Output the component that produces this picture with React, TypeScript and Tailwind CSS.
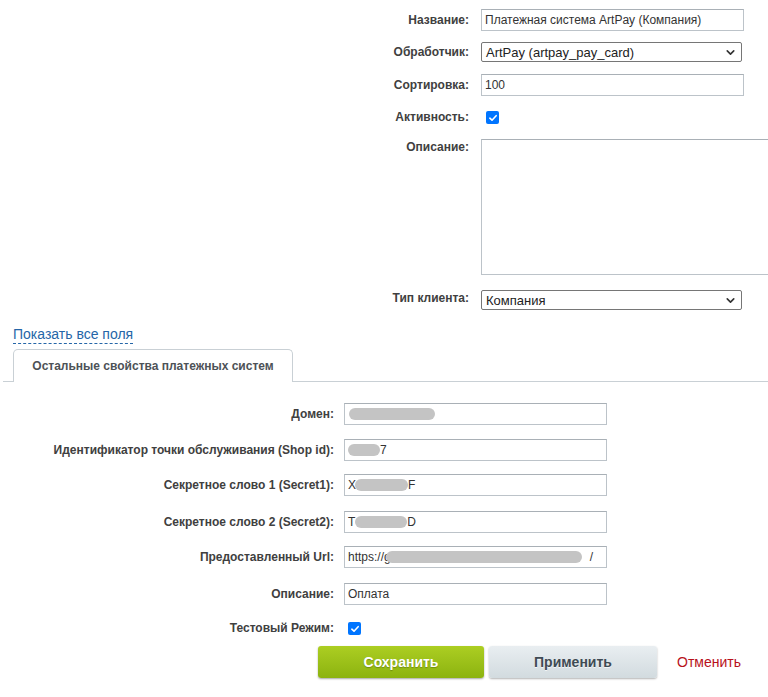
import { ChevronDown } from "lucide-react";

const font = { fontFamily: '"Liberation Sans", Arial, sans-serif' };

function Blob({ w, className = "" }: { w: number; className?: string }) {
  return <span className={`inline-block h-[12px] rounded-full bg-[#c4c4c4] ${className}`} style={{ width: w }} />;
}

function TopRow({ label, children, className = "", pt = "pt-[4px]" }: { label: string; children: React.ReactNode; className?: string; pt?: string }) {
  return (
    <div className={`flex items-start ${className}`}>
      <div className={`w-[469px] shrink-0 text-right text-[12px] leading-[14px] font-bold text-[#404040] ${pt}`}>{label}</div>
      <div className="ml-3">{children}</div>
    </div>
  );
}

function BottomRow({ label, children, className = "", pt = "pt-[4px]" }: { label: string; children: React.ReactNode; className?: string; pt?: string }) {
  return (
    <div className={`flex items-start ${className}`}>
      <div className={`w-[334px] shrink-0 text-right text-[12px] leading-[14px] font-bold text-[#404040] ${pt}`}>{label}</div>
      <div className="ml-[10px]">{children}</div>
    </div>
  );
}

function Field({ children, w = 263 }: { children: React.ReactNode; w?: number }) {
  return (
    <div
      className="h-[22px] border border-[#bcc3c9] border-t-[#a9b0b6] bg-white flex items-center px-[3px] text-[12px] leading-[14px] text-[#333] whitespace-nowrap overflow-hidden"
      style={{ width: w }}
    >
      {children}
    </div>
  );
}

function Select({ value }: { value: string }) {
  return (
    <div className="w-[261px] h-[20px] border border-[#767676] rounded-[2px] bg-white flex items-center justify-between pl-[4px] pr-[4px] text-[13px] leading-[15px] text-[#222]">
      <span>{value}</span>
      <ChevronDown className="size-[13px] text-[#333]" strokeWidth={3} />
    </div>
  );
}

function Check() {
  return (
    <div className="w-[13px] h-[13px] rounded-[2px] bg-[#0075ff] flex items-center justify-center">
      <svg viewBox="0 0 12 12" className="w-[10px] h-[10px]">
        <path d="M2.2 6.2 L4.8 8.6 L9.8 3.2" fill="none" stroke="white" strokeWidth="1.9" strokeLinecap="round" strokeLinejoin="round" />
      </svg>
    </div>
  );
}

export default function App() {
  return (
    <div className="w-[768px] h-[697px] overflow-hidden bg-white" style={font}>
      <div className="pt-[9px]">
        <TopRow label="Название:">
          <Field>Платежная система ArtPay (Компания)</Field>
        </TopRow>
        <TopRow label="Обработчик:" className="mt-[11px]" pt="pt-[3px]">
          <Select value="ArtPay (artpay_pay_card)" />
        </TopRow>
        <TopRow label="Сортировка:" className="mt-[12px]">
          <Field>100</Field>
        </TopRow>
        <TopRow label="Активность:" className="mt-[9px]" pt="pt-[5px]">
          <div className="h-[22px] pl-[5px] pt-[6px]">
            <Check />
          </div>
        </TopRow>
        <TopRow label="Описание:" className="mt-[12px]" pt="pt-[1px]">
          <div className="w-[300px] h-[136px] border border-[#bcc3c9] border-t-[#a9b0b6] bg-white" />
        </TopRow>
        <TopRow label="Тип клиента:" className="mt-[15px]" pt="pt-[1px]">
          <Select value="Компания" />
        </TopRow>
      </div>

      <div className="pl-[13px] mt-[12px] h-[20px]">
        <span className="inline-block text-[14px] text-[#2566a8] border-b border-dashed border-[#2566a8] leading-[18px]">
          Показать все поля
        </span>
      </div>

      <div className="flex items-end mt-[7px] h-[33px]">
        <div className="w-[10px] ml-[3px] border-b border-[#c9d0d5]" />
        <div className="w-[280px] h-[33px] border border-b-0 border-[#c9d0d5] rounded-t-[5px] flex items-center justify-center text-[12px] font-bold text-[#4d5257]">
          Остальные свойства платежных систем
        </div>
        <div className="flex-1 border-b border-[#c9d0d5]" />
      </div>

      <div className="pt-[21px]">
        <BottomRow label="Домен:">
          <Field>
            <Blob w={86} className="ml-[1px]" />
          </Field>
        </BottomRow>
        <BottomRow label="Идентификатор точки обслуживания (Shop id):" className="mt-[14px]">
          <Field>
            <Blob w={32} />
            <span>7</span>
          </Field>
        </BottomRow>
        <BottomRow label="Секретное слово 1 (Secret1):" className="mt-[13px]">
          <Field>
            <span>X</span>
            <Blob w={53} className="ml-[-1px]" />
            <span>F</span>
          </Field>
        </BottomRow>
        <BottomRow label="Секретное слово 2 (Secret2):" className="mt-[15px]">
          <Field>
            <span>T</span>
            <Blob w={52} />
            <span>D</span>
          </Field>
        </BottomRow>
        <BottomRow label="Предоставленный Url:" className="mt-[13px]">
          <Field>
            <span>https://g</span>
            <Blob w={196} className="ml-[-5px]" />
            <span className="ml-[8px]">/</span>
          </Field>
        </BottomRow>
        <BottomRow label="Описание:" className="mt-[15px]">
          <Field>Оплата</Field>
        </BottomRow>
        <BottomRow label="Тестовый Режим:" className="mt-[12px]" pt="pt-[4px]">
          <div className="h-[22px] pl-[4px] pt-[5px]">
            <Check />
          </div>
        </BottomRow>
      </div>

      <div className="flex items-center pl-[318px] mt-[7px]">
        <button className="w-[166px] h-[32px] rounded-[3px] bg-gradient-to-b from-[#acce22] to-[#8cb30f] text-white text-[14px] font-bold shadow-[0_1px_2px_rgba(0,0,0,0.35)] [text-shadow:0_1px_1px_rgba(0,0,0,0.25)]">
          Сохранить
        </button>
        <button className="ml-[5px] w-[168px] h-[32px] rounded-[3px] bg-gradient-to-b from-[#e9eef1] to-[#d2dbdf] text-[#3f4b54] text-[14px] font-bold shadow-[0_1px_2px_rgba(0,0,0,0.3)] [text-shadow:0_1px_0_rgba(255,255,255,0.7)]">
          Применить
        </button>
        <span className="ml-[20px] text-[14px] text-[#b8111b]">Отменить</span>
      </div>
    </div>
  );
}
